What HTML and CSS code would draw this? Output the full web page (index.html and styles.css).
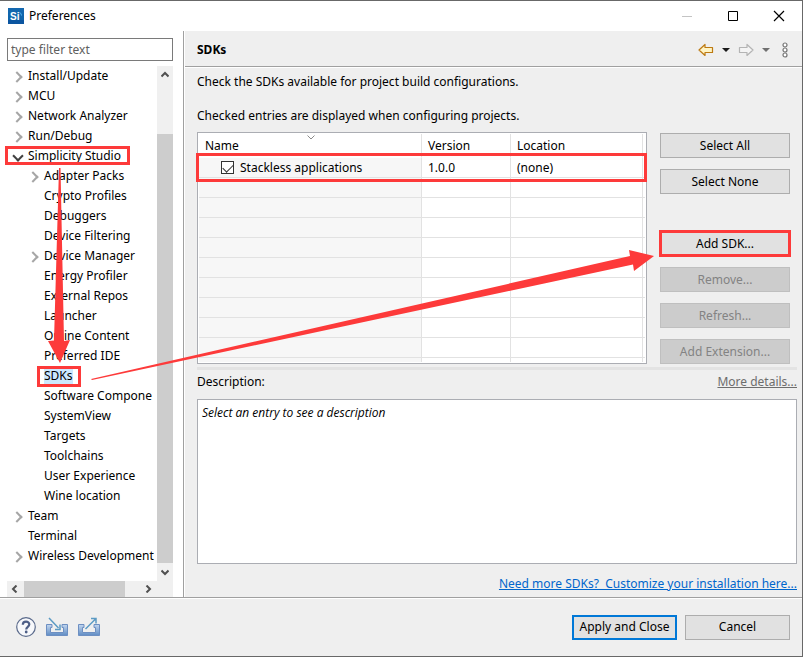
FILE: index.html
```
<!DOCTYPE html>
<html lang="en">
<head>
<meta charset="utf-8">
<title>Preferences</title>
<link rel="stylesheet" href="styles.css">
</head>
<body>
<div class="window">
  <header class="titlebar">
    <svg class="app-icon" viewBox="0 0 16 16" aria-hidden="true">
      <defs><linearGradient id="app" x1="0" y1="0" x2="0" y2="1"><stop offset="0" stop-color="#1468b0"/><stop offset="1" stop-color="#0a63a8"/></linearGradient></defs>
      <rect width="16" height="16" fill="url(#app)"/>
      <path d="M0 12h16v4H0z" fill="#0b55a0"/>
      <text x="2" y="12" class="app-letters">Si</text>
      <path d="M11.500 4.500q2 .5 2 3" fill="none" stroke="#4fb0f0"/>
    </svg>
    <span class="title">Preferences</span>
    <div class="window-controls">
      <button type="button" aria-label="Minimize" disabled><svg viewBox="0 0 12 12"><path d="M1 6.500h10" stroke="#c4c4c4"/></svg></button>
      <button type="button" aria-label="Maximize"><svg viewBox="0 0 12 12"><path d="M1.500 1.500h9v9h-9z" fill="none" stroke="#000"/></svg></button>
      <button type="button" aria-label="Close"><svg viewBox="0 0 12 12"><path d="M1 1l10 10M11 1L1 11" stroke="#000" stroke-width="1.200"/></svg></button>
    </div>
  </header>

  <div class="content">
    <nav class="sidebar" aria-label="Preference pages">
      <input class="filter" type="text" placeholder="type filter text" aria-label="Filter">
      <div class="tree-pane">
        <ul class="tree">
          <li class="closed">Install/Update</li>
          <li class="closed">MCU</li>
          <li class="closed">Network Analyzer</li>
          <li class="closed">Run/Debug</li>
          <li class="open"><span class="mark mark-studio">Simplicity Studio</span>
            <ul>
              <li class="closed">Adapter Packs</li>
              <li>Crypto Profiles</li>
              <li>Debuggers</li>
              <li>Device Filtering</li>
              <li class="closed">Device Manager</li>
              <li>Energy Profiler</li>
              <li>External Repos</li>
              <li>Launcher</li>
              <li>Online Content</li>
              <li>Preferred IDE</li>
              <li><span class="mark mark-sdks selected">SDKs</span></li>
              <li>Software Compone</li>
              <li>SystemView</li>
              <li>Targets</li>
              <li>Toolchains</li>
              <li>User Experience</li>
              <li>Wine location</li>
            </ul>
          </li>
          <li class="closed">Team</li>
          <li>Terminal</li>
          <li class="closed">Wireless Development</li>
        </ul>
        <div class="vbar">
          <svg viewBox="0 0 8 8"><path d="M0.500 5.500L4 2l3.500 3.500" class="chev"/></svg>
          <div class="vthumb"></div>
          <svg viewBox="0 0 8 8"><path d="M0.500 2.500L4 6l3.500-3.500" class="chev"/></svg>
        </div>
        <div class="hbar">
          <svg viewBox="0 0 8 8"><path d="M5.500 0.500L2 4l3.500 3.500" class="chev"/></svg>
          <div class="htrack"><div class="hthumb"></div></div>
          <svg viewBox="0 0 8 8"><path d="M2.500 0.500L6 4l-3.500 3.500" class="chev"/></svg>
        </div>
      </div>
    </nav>

    <main class="page">
      <div class="page-header">
        <h1>SDKs</h1>
        <div class="page-tools">
          <button type="button" aria-label="Back"><svg width="16" height="14" viewBox="0 0 16 14"><path d="M1 7l6-5.500v3h7.500v5H7v3z" fill="#fff4c4" stroke="#bd7a12" stroke-width="1.200" stroke-linejoin="round"/></svg></button>
          <button type="button" aria-label="Back history"><svg width="8" height="4" viewBox="0 0 8 4"><path d="M0 0h8L4 4z" fill="#1a1a1a"/></svg></button>
          <button type="button" aria-label="Forward"><svg width="16" height="14" viewBox="0 0 16 14"><path d="M15 7L9 1.500v3H1.500v5H9v3z" fill="#f4f4f4" stroke="#b4b4b4" stroke-width="1.200" stroke-linejoin="round"/></svg></button>
          <button type="button" aria-label="Forward history"><svg width="8" height="4" viewBox="0 0 8 4"><path d="M0 0h8L4 4z" fill="#707070"/></svg></button>
          <button type="button" class="menu" aria-label="Menu"><svg width="6" height="16" viewBox="0 0 6 16"><g fill="#fff" stroke="#757575" stroke-width="1.200"><circle cx="3" cy="3" r="2"/><circle cx="3" cy="8" r="2"/><circle cx="3" cy="13" r="2"/></g></svg></button>
        </div>
      </div>
      <div class="page-body">
        <p>Check the SDKs available for project build configurations.</p>
        <p>Checked entries are displayed when configuring projects.</p>
        <div class="sdk-area">
          <div class="sdk-list">
            <table>
              <colgroup><col class="c-name"><col class="c-version"><col><col class="c-end"></colgroup>
              <thead><tr><th>Name<svg class="sort" viewBox="0 0 8 5"><path d="M.500.500L4 4 7.500.500" fill="none" stroke="#8a8a8a"/></svg></th><th>Version</th><th>Location</th><th></th></tr></thead>
              <tbody>
                <tr><td><label><input type="checkbox" checked>Stackless applications</label></td><td>1.0.0</td><td>(none)</td><td></td></tr>
                <tr><td></td><td></td><td></td><td></td></tr>
                <tr><td></td><td></td><td></td><td></td></tr>
                <tr><td></td><td></td><td></td><td></td></tr>
                <tr><td></td><td></td><td></td><td></td></tr>
                <tr><td></td><td></td><td></td><td></td></tr>
                <tr><td></td><td></td><td></td><td></td></tr>
                <tr><td></td><td></td><td></td><td></td></tr>
                <tr><td></td><td></td><td></td><td></td></tr>
                <tr><td></td><td></td><td></td><td></td></tr>
                <tr class="tail"><td></td><td></td><td></td><td></td></tr>
              </tbody>
            </table>
            <div class="mark-row"></div>
          </div>
          <div class="actions">
            <button type="button" class="btn">Select All</button>
            <button type="button" class="btn">Select None</button>
            <button type="button" class="btn mark mark-add">Add SDK...</button>
            <button type="button" class="btn" disabled>Remove...</button>
            <button type="button" class="btn" disabled>Refresh...</button>
            <button type="button" class="btn" disabled>Add Extension...</button>
          </div>
        </div>
        <div class="sash"></div>
        <div class="desc-head"><span>Description:</span><a class="muted" href="#">More details...</a></div>
        <div class="description">Select an entry to see a description</div>
        <a class="more" href="#">Need more SDKs?&nbsp; Customize your installation here...</a>
      </div>
    </main>
  </div>

  <footer class="footer">
    <svg width="0" height="0" class="defs" aria-hidden="true"><defs><linearGradient id="tray" x1="0" y1="0" x2="0" y2="1"><stop offset="0" stop-color="#c3d7ef"/><stop offset="1" stop-color="#5f8cc4"/></linearGradient></defs></svg>
    <div class="tools">
      <button type="button" aria-label="Help"><svg width="20" height="20" viewBox="0 0 20 20"><circle cx="10" cy="10" r="9.300" fill="#f7f8fb" stroke="#5b6b8c" stroke-width="1.200"/><path d="M6.800 7.700C6.800 3.600 13.300 3.700 13.300 7.300c0 2.500-3.100 2.500-3.100 5.200" fill="none" stroke="#4d5e86" stroke-width="2.200"/><circle cx="10.200" cy="15" r="1.400" fill="#4d5e86"/></svg></button>
      <button type="button" aria-label="Import"><svg width="22" height="20" viewBox="0 0 22 20"><path d="M.500 7.500H6v3H4.500v5h13v-5H16v-3h5.500v11H.500z" fill="url(#tray)" stroke="#6d8fc2"/><path d="M3 1l9.500 10M14 7.500v5H9" fill="none" stroke="#5c9bc4" stroke-width="1.500"/></svg></button>
      <button type="button" aria-label="Export"><svg width="22" height="20" viewBox="0 0 22 20"><path d="M.500 7.500H6v3H4.500v5h13v-5H16v-3h5.500v11H.500z" fill="url(#tray)" stroke="#6d8fc2"/><path d="M7.500 12L17.500 2M13 1.500h5v5" fill="none" stroke="#5c9bc4" stroke-width="1.500"/></svg></button>
    </div>
    <div class="dialog-buttons">
      <button type="button" class="btn primary">Apply and Close</button>
      <button type="button" class="btn">Cancel</button>
    </div>
  </footer>

  <svg class="arrows" width="803" height="657" viewBox="0 0 803 657" aria-hidden="true">
    <path d="M59 168h1.500L64 341l6-1-10 23-12-22 6-.500z" fill="#fd3a3a"/>
    <path d="M91 379L630 256l-1-6 25 6-20 15-1-6.500L92 380z" fill="#fd3a3a"/>
  </svg>
</div>
</body>
</html>
```
FILE: styles.css
```
* { box-sizing: border-box; }

body {
  margin: 0;
  background: #efefef;
  color: #000;
  font: 12px/20px "Noto Sans", "Open Sans", sans-serif;
}

button, input { font: inherit; color: inherit; }
svg { display: block; }

.window {
  position: relative;
  display: flex;
  flex-direction: column;
  min-height: 100vh;
  border: solid #686868;
  border-width: 1px 1px 1px 0;
}

.titlebar {
  display: flex;
  align-items: center;
  height: 30px;
  padding-left: 8px;
  background: #fff;
}
.app-icon { width: 16px; height: 16px; }
.app-letters { font: bold 10px "Liberation Sans", sans-serif; fill: #fff; }
.title { margin-left: 5px; }
.window-controls { display: flex; margin-left: auto; }
.window-controls button {
  width: 46px;
  height: 28px;
  padding: 0;
  border: 0;
  background: none;
}
.window-controls svg { width: 12px; height: 12px; margin: auto; }

.content { display: flex; flex: 1; }

.sidebar {
  display: flex;
  flex-direction: column;
  flex: 0 0 184px;
  padding: 7px 10px 0 7px;
  border-right: 1px solid #a0a0a0;
  background: #fff;
}
.filter {
  width: 100%;
  height: 23px;
  padding: 0 3px;
  border: 1px solid #7a7a7a;
  background: #fff;
}
.filter::placeholder { color: #606060; opacity: 1; }

.tree-pane {
  display: grid;
  grid-template-columns: minmax(0, 1fr) 16px;
  grid-template-rows: 1fr 16px;
  flex: 1;
  margin-top: 5px;
}
.tree, .tree ul { margin: 0; padding: 0; list-style: none; }
.tree { margin-left: -2px; padding-left: 2px; overflow: hidden; white-space: nowrap; }
.tree li { position: relative; padding-left: 21px; }
.tree ul li { padding-left: 16px; }
.closed::before, .open::before {
  content: "";
  position: absolute;
  top: 7px;
  left: 6px;
  width: 6px;
  height: 6px;
  border: solid #a6a6a6;
  border-width: 2px 2px 0 0;
  transform: rotate(45deg);
}
.tree ul .closed::before { left: 1px; }
.open::before {
  top: 6px;
  left: 7px;
  border-color: #404040;
  border-width: 0 2px 2px 0;
}

.mark { position: relative; }
.mark::after, .mark-row {
  content: "";
  position: absolute;
  border: 3px solid #fd3a3a;
}
.mark-studio::after { inset: -1px -9px -1px -23px; }
.selected { display: inline-block; background: #cce8ff; }
.mark-sdks::after { inset: 0 -8px -1px -7px; }

.vbar {
  display: flex;
  flex-direction: column;
  align-items: center;
  background: #f0f0f0;
}
.vbar svg, .hbar svg { flex: none; width: 8px; height: 8px; margin: 5px; }
.chev { fill: none; stroke: #505050; stroke-width: 2; }
.vthumb { flex: 1; width: 100%; margin-top: 50px; background: #cdcdcd; }
.hbar {
  display: flex;
  align-items: center;
  grid-column: 1 / -1;
  padding-right: 16px;
  background: #f0f0f0;
}
.hbar svg:first-child { margin-left: 4px; }
.htrack { flex: 1; height: 100%; }
.hthumb { width: 88%; height: 100%; background: #cdcdcd; }

.page {
  display: flex;
  flex-direction: column;
  flex: 1;
  border-left: 1px solid #fff;
}
.page-header {
  display: flex;
  align-items: center;
  justify-content: space-between;
  height: 36px;
  padding: 2px 14px 0 12px;
  border-bottom: 1px solid #a0a0a0;
  box-shadow: 0 1px #fff;
}
h1 { margin: 0; font-size: 12px; }
.page-tools { display: flex; align-items: center; gap: 8px; }
.page-tools button, .tools button { padding: 0; border: 0; background: none; }
.page-tools .menu { margin-left: 4px; }

.page-body {
  display: flex;
  flex-direction: column;
  flex: 1;
  padding: 5px 5px 3px 12px;
}
p { margin: 0 0 14px; }
p + p { margin-bottom: 6px; }
.sdk-area { display: flex; gap: 13px; padding-right: 7px; }
.sdk-list {
  position: relative;
  flex: 1;
  padding: 1px;
  border: 1px solid #abadb3;
  background: #fff;
}
table { width: 100%; border-collapse: separate; border-spacing: 0; table-layout: fixed; }
.c-name { width: 223px; }
.c-version { width: 89px; }
.c-end { width: 2px; }
th, td {
  height: 20px;
  padding: 0 6px;
  border: solid #e2e2e2;
  border-width: 0 1px 1px 0;
  font-weight: normal;
  text-align: left;
  line-height: 18px;
}
th { position: relative; height: 24px; border-bottom-color: #fff; }
th:last-child, td:last-child { padding: 0; border-right: 0; }
td:first-child { background: #f7f7f7; }
.tail td { height: 4px; border-bottom: 0; }
.sort { position: absolute; top: 1px; left: 108px; width: 8px; height: 5px; }
label { display: flex; align-items: center; gap: 6px; padding-left: 16px; }
input[type="checkbox"] {
  width: 13px;
  height: 13px;
  margin: 0;
  border: 1px solid #333;
  background: #fff;
  appearance: none;
}
input[type="checkbox"]:checked::before {
  content: "";
  display: block;
  width: 9px;
  height: 5px;
  margin: 2px 1px;
  border: solid #333;
  border-width: 0 0 1px 1px;
  transform: rotate(-45deg);
}
.mark-row { inset: 20px -1px auto -2px; height: 29px; }

.actions {
  display: flex;
  flex-direction: column;
  gap: 11px;
  flex: 0 0 130px;
  padding-top: 1px;
}
.btn {
  height: 25px;
  padding: 0;
  border: 1px solid #adadad;
  background: #e1e1e1;
  line-height: 20px;
}
.btn:disabled { border-color: #bfbfbf; background: #ccc; color: #838383; }
.mark-add { margin-top: 26px; }
.mark-add::after { inset: -2px; }

.sash { height: 3px; margin-top: 3px; background: #e3e3e3; }
.desc-head { display: flex; justify-content: space-between; margin: 2px 0 7px; }
a { color: #0066cc; }
.muted { color: #6d6d6d; }
.description {
  flex: 1;
  padding: 3px 4px;
  border: 1px solid #abadb3;
  background: #fff;
  font-family: "Open Sans", sans-serif;
  font-size: 12px;
  font-style: italic;
}
.more { align-self: flex-end; margin-top: 10px; }

.footer {
  display: flex;
  align-items: center;
  justify-content: space-between;
  height: 59px;
  padding: 0 12px 0 16px;
  border-top: 1px solid #a0a0a0;
  box-shadow: inset 0 1px #fff;
}
.defs { position: absolute; }
.tools { display: flex; gap: 10px; }
.dialog-buttons { display: flex; gap: 8px; }
.dialog-buttons .btn { width: 105px; }
.dialog-buttons .primary { border: 2px solid #0078d7; }

.arrows { position: absolute; top: -1px; left: 0; pointer-events: none; }
```
